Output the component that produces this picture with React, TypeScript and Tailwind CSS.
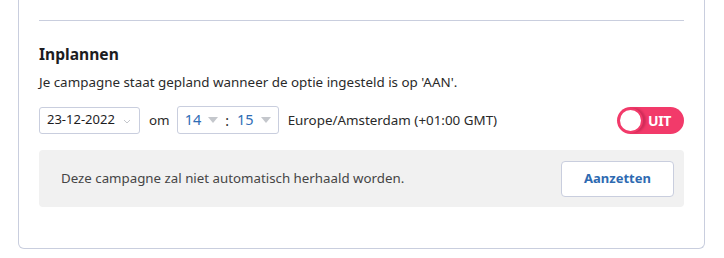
import React from "react";

function Caret() {
  return (
    <svg width="10" height="6" viewBox="0 0 10 6" className="shrink-0">
      <path d="M0 0 L10 0 L5 6 Z" fill="#c4c7cc" />
    </svg>
  );
}

export default function App() {
  return (
    <div className="w-[724px] h-[258px] bg-white" style={{ fontFamily: '"Noto Sans", Roboto, sans-serif' }}>
      <div className="ml-[18px] w-[687px] h-[249px] border border-t-0 border-[#c9cede] rounded-b-[6px] px-5 pt-5">
        <div className="h-px bg-[#c9cede]" />

        <h2 className="mt-[22px] text-[15.6px] leading-[22px] font-bold text-[#1d1d1f]">Inplannen</h2>
        <p className="mt-[7px] text-[13.4px] leading-[20px] text-[#2a2a2a]">
          Je campagne staat gepland wanneer de optie ingesteld is op 'AAN'.
        </p>

        <div className="mt-[14px] flex items-center h-[28px]">
          <div className="w-[101px] h-[27px] border border-[#c9cede] rounded-[3px] flex items-center pl-[7px] pr-[8px] text-[13px] text-[#1d1d1f]">
            <span>23-12-2022</span>
            <svg width="8" height="5" viewBox="0 0 8 5" className="ml-auto mt-[2px]">
              <path d="M1 1 L4 4 L7 1" fill="none" stroke="#c4c7cc" strokeWidth="1" />
            </svg>
          </div>
          <span className="ml-[9px] text-[13.4px] text-[#2a2a2a]">om</span>
          <div className="ml-[7px] w-[102px] h-[28px] border border-[#c9cede] rounded-[3px] flex items-center pl-[7px] text-[14.5px] text-[#2f6db5]">
            <span>14</span>
            <span className="ml-[7px]"><Caret /></span>
            <span className="ml-[7px] text-[#2a2a2a] text-[14px]">:</span>
            <span className="ml-[8px]">15</span>
            <span className="ml-[7px]"><Caret /></span>
          </div>
          <span className="ml-[9px] text-[13.4px] text-[#2a2a2a]">Europe/Amsterdam (+01:00 GMT)</span>

          <div className="ml-auto w-[67px] h-[27px] rounded-full bg-[#f23a6a] flex items-center">
            <div className="w-[25px] h-[25px] ml-[1px] rounded-full bg-white border-2 border-[#f23a6a] shadow-[3px_0_2px_rgba(150,20,60,0.35)]" />
            <span className="ml-[5px] text-[14px] font-bold text-white tracking-tight">UIT</span>
          </div>
        </div>

        <div className="mt-[16px] h-[57px] bg-[#f1f1f1] rounded-[4px] flex items-center pl-[22px] pr-[10px]">
          <span className="text-[13.3px] text-[#454545]">Deze campagne zal niet automatisch herhaald worden.</span>
          <button className="ml-auto w-[113px] h-[36px] bg-white border border-[#c9cede] rounded-[4px] text-[13px] font-bold text-[#2e6ab1]">
            Aanzetten
          </button>
        </div>
      </div>
    </div>
  );
}
